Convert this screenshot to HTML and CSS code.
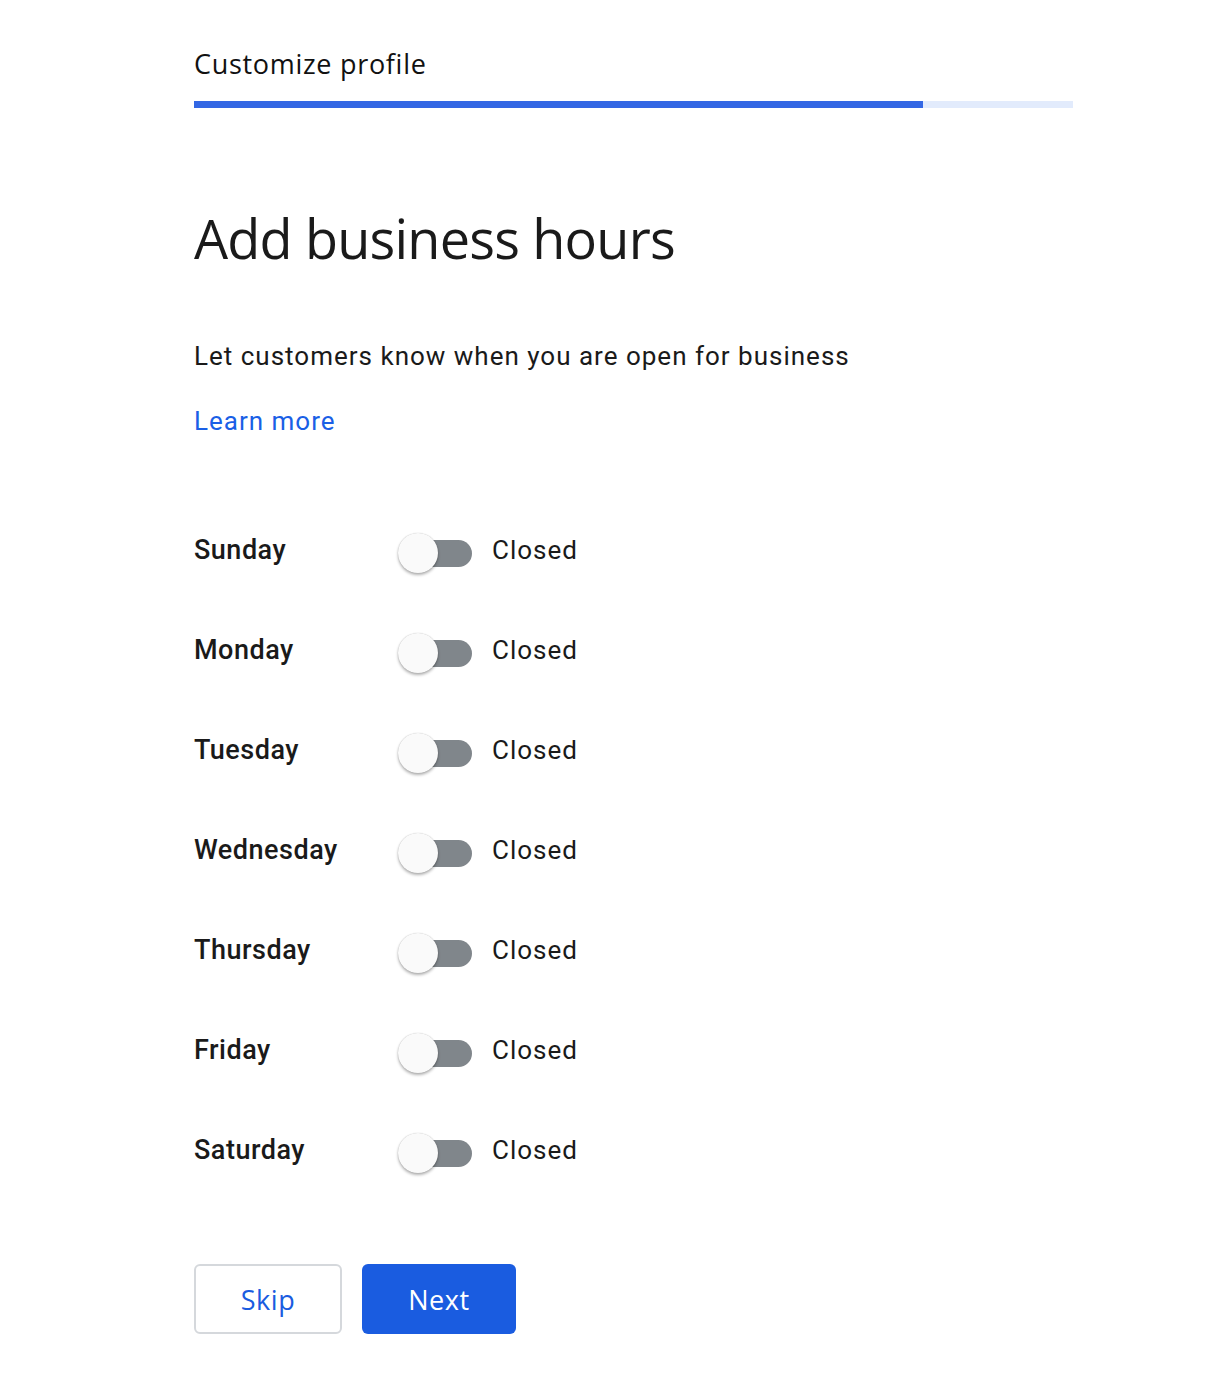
FILE: index.html
```html
<!DOCTYPE html>
<html lang="en">
<head>
<meta charset="utf-8">
<title>Add business hours</title>
<link rel="stylesheet" href="styles.css">
</head>
<body>
<main class="page">
  <header class="top">
    <div class="top-title">Customize profile</div>
    <div class="progress"><div class="progress-fill" style="width: 82.9%"></div></div>
  </header>
  <h1 class="heading">Add business hours</h1>
  <p class="desc">Let customers know when you are open for business</p>
  <a class="learn" href="#">Learn more</a>
  <ul class="days">
    <li class="day"><span class="day-name">Sunday</span><span class="switch"><span class="knob"></span></span><span class="state">Closed</span></li>
    <li class="day"><span class="day-name">Monday</span><span class="switch"><span class="knob"></span></span><span class="state">Closed</span></li>
    <li class="day"><span class="day-name">Tuesday</span><span class="switch"><span class="knob"></span></span><span class="state">Closed</span></li>
    <li class="day"><span class="day-name">Wednesday</span><span class="switch"><span class="knob"></span></span><span class="state">Closed</span></li>
    <li class="day"><span class="day-name">Thursday</span><span class="switch"><span class="knob"></span></span><span class="state">Closed</span></li>
    <li class="day"><span class="day-name">Friday</span><span class="switch"><span class="knob"></span></span><span class="state">Closed</span></li>
    <li class="day"><span class="day-name">Saturday</span><span class="switch"><span class="knob"></span></span><span class="state">Closed</span></li>
  </ul>
  <div class="actions">
    <button class="btn btn-skip">Skip</button>
    <button class="btn btn-next">Next</button>
  </div>
</main>
</body>
</html>
```
FILE: styles.css
```css
* { box-sizing: border-box; }
html, body { margin: 0; padding: 0; background: #fff; }
body { font-family: Roboto, "Liberation Sans", sans-serif; color: #202124; }
.page {
  width: 879px;
  margin-left: 194px;
  padding-top: 46px;
}
.top-title {
  font-family: "Open Sans", Roboto, sans-serif;
  font-size: 27px;
  line-height: 36px;
  color: #111;
  letter-spacing: 0.7px;
}
.progress {
  margin-top: 19px;
  height: 7px;
  background: #e2ebfc;
}
.progress-fill {
  height: 100%;
  background: #3367e4;
}
.heading {
  margin: 98px 0 0;
  font-family: "Open Sans", Roboto, sans-serif;
  font-weight: 400;
  font-size: 54px;
  line-height: 64px;
  color: #1a1a1a;
  letter-spacing: -0.8px;
}
.desc {
  margin: 70px 0 0;
  font-size: 26px;
  line-height: 32px;
  letter-spacing: 1px;
  color: #1a1a1a;
}
.learn {
  display: inline-block;
  margin-top: 32px;
  font-size: 26px;
  line-height: 34px;
  letter-spacing: 1px;
  color: #1a5fe6;
  text-decoration: none;
}
.days {
  list-style: none;
  margin: 94px 0 0;
  padding: 0;
  display: flex;
  flex-direction: column;
  gap: 58px;
}
.day {
  display: flex;
  align-items: center;
  height: 42px;
}
.day-name {
  width: 204px;
  margin-bottom: 6px;
  font-size: 27px;
  font-weight: 500;
  letter-spacing: 0.5px;
  color: #1a1a1a;
}
.switch {
  position: relative;
  width: 74px;
  height: 42px;
  display: flex;
  align-items: center;
  justify-content: flex-end;
}
.switch::before {
  content: "";
  width: 68px;
  height: 27px;
  border-radius: 14px;
  background: #80868b;
}
.knob {
  position: absolute;
  left: 0;
  top: 1px;
  width: 40px;
  height: 40px;
  border-radius: 50%;
  background: #fafafa;
  box-shadow: 0 2px 3px rgba(0,0,0,0.3), 0 0 1px rgba(0,0,0,0.25);
}
.state {
  margin-left: 20px;
  margin-bottom: 6px;
  font-size: 26px;
  letter-spacing: 1px;
  color: #1a1a1a;
}
.actions {
  display: flex;
  gap: 20px;
  margin-top: 90px;
  padding-bottom: 54px;
}
.btn {
  height: 70px;
  border-radius: 6px;
  font-family: "Open Sans", Roboto, sans-serif;
  font-size: 27px;
  font-weight: 500;
  letter-spacing: 0.6px;
  cursor: pointer;
}
.btn-skip {
  width: 148px;
  background: #fff;
  border: 2px solid #d5d8dc;
  color: #1a5ce0;
}
.btn-next {
  width: 154px;
  background: #1a5ce0;
  border: none;
  color: #fff;
}
```
